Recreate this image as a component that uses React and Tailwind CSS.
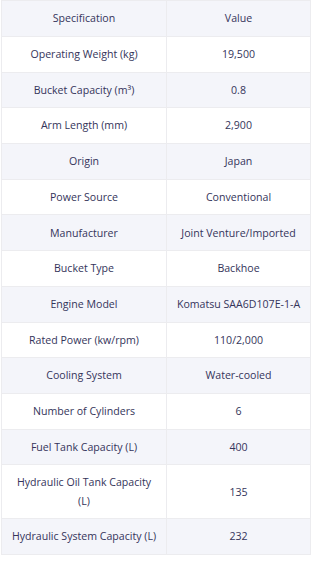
const rows = [
  ['Operating Weight (kg)', '19,500'],
  ['Bucket Capacity (m³)', '0.8'],
  ['Arm Length (mm)', '2,900'],
  ['Origin', 'Japan'],
  ['Power Source', 'Conventional'],
  ['Manufacturer', 'Joint Venture/Imported'],
  ['Bucket Type', 'Backhoe'],
  ['Engine Model', 'Komatsu SAA6D107E-1-A'],
  ['Rated Power (kw/rpm)', '110/2,000'],
  ['Cooling System', 'Water-cooled'],
  ['Number of Cylinders', '6'],
  ['Fuel Tank Capacity (L)', '400'],
  ['Hydraulic Oil Tank Capacity (L)', '135'],
  ['Hydraulic System Capacity (L)', '232'],
];

export default function App() {
  return (
    <div className="w-[315px] h-[565px] bg-white pl-px font-['Open_Sans',sans-serif] text-[10.6px] text-[#34345a]">
      <table className="w-[309px] table-fixed border-collapse border border-[#ececef] text-center">
        <colgroup>
          <col className="w-[165px]" />
          <col className="w-[144px]" />
        </colgroup>
        <thead>
          <tr className="bg-[#f4f5fa]">
            <th className="h-[36px] border border-[#ececef] px-2 font-medium">Specification</th>
            <th className="h-[36px] border border-[#ececef] px-2 font-medium">Value</th>
          </tr>
        </thead>
        <tbody>
          {rows.map(([spec, value], i) => (
            <tr key={spec} className={i % 2 === 1 ? 'bg-[#f4f5fa]' : 'bg-white'}>
              <td className="h-[35.7px] border border-[#ececef] px-2 py-2 leading-[18.5px]">{spec}</td>
              <td className="h-[35.7px] border border-[#ececef] px-1 py-2 leading-[18.5px]">{value}</td>
            </tr>
          ))}
        </tbody>
      </table>
    </div>
  );
}
